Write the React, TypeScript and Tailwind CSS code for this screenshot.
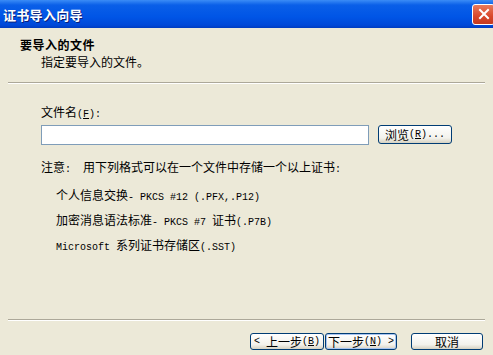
import React from 'react';

const cjk = '"Noto Sans CJK SC", "Noto Sans CJK JP", sans-serif';

// half-width latin segment, SimSun-ish
const L: React.FC<{ children: React.ReactNode }> = ({ children }) => (
  <span className="font-['Liberation_Mono',monospace] text-[10px] whitespace-pre">{children}</span>
);

const XpButton: React.FC<{ children: React.ReactNode; width: string; isDefault?: boolean }> = ({ children, width, isDefault }) => (
  <div
    className={`${width} h-[17px] flex items-center justify-center rounded-[3px] border border-[#003c74] bg-[linear-gradient(to_bottom,#ffffff,#f3f2ec_70%,#d6d2c2)] text-[12px] leading-none text-black ${
      isDefault ? 'shadow-[inset_0_0_0_1px_#a8c4f0]' : ''
    }`}
  >
    {children}
  </div>
);

export default function App() {
  return (
    <div className="w-[493px] h-[355px] overflow-hidden bg-[#ece9d8] flex flex-col text-black" style={{ fontFamily: cjk }}>
      {/* Title bar */}
      <div className="h-[28px] shrink-0 flex items-center bg-[linear-gradient(to_bottom,#3b8cf6_0%,#0a5fe8_18%,#0055e6_60%,#0048d8_90%,#003cc0_100%)]">
        <span className="pl-[3px] text-[13px] font-bold leading-none text-white tracking-[0.3px] [text-shadow:1px_1px_0_#0a1f7a]">
          证书导入向导
        </span>
        <div className="ml-auto -mr-[2px] w-[23px] h-[21px] rounded-[3px] border border-white bg-[linear-gradient(to_bottom,#e87a5c,#d9472a_60%,#c43a20)] flex items-center justify-center">
          <svg width="12" height="12" viewBox="0 0 12 12">
            <path d="M2 2 L10 10 M10 2 L2 10" stroke="#ffffff" strokeWidth="2" strokeLinecap="square" />
          </svg>
        </div>
      </div>

      {/* Header */}
      <div className="h-[54px] shrink-0 flex flex-col pt-[10px]">
        <div className="pl-[20px] text-[12px] font-bold leading-[14px] tracking-[0.5px]">要导入的文件</div>
        <div className="pl-[41px] mt-[3px] text-[12px] leading-[14px]">指定要导入的文件。</div>
      </div>
      <div className="mx-[8px] h-[2px] shrink-0 border-t border-[#aca899] border-b border-b-white" />

      {/* Body */}
      <div className="flex-1 flex flex-col pl-[41px] pt-[21px]">
        <div className="text-[12px] leading-[14px]">
          文件名<L>(<span className="underline">F</span>):</L>
        </div>
        <div className="mt-[3px] flex items-start">
          <div className="w-[328px] h-[20px] border border-[#7f9db9] bg-white" />
          <div className="ml-[9px]">
            <div className="w-[74px] h-[19px] flex items-center justify-center rounded-[3px] border border-[#003c74] bg-[linear-gradient(to_bottom,#ffffff,#f3f2ec_70%,#d6d2c2)] text-[12px] leading-none">
              浏览<L>(<span className="underline">R</span>)...</L>
            </div>
          </div>
        </div>
        <div className="mt-[15px] text-[12px] leading-[14px] whitespace-pre">
          注意<L>:  </L>用下列格式可以在一个文件中存储一个以上证书<L>:</L>
        </div>
        <div className="pl-[15px] flex flex-col gap-[8px] mt-[11px] text-[12px] leading-[14px]">
          <div className="whitespace-pre">
            个人信息交换<L>- PKCS #12 (.PFX,.P12)</L>
          </div>
          <div className="whitespace-pre">
            加密消息语法标准<L>- PKCS #7 </L>证书<L>(.P7B)</L>
          </div>
          <div className="whitespace-pre">
            <L>Microsoft </L>系列证书存储区<L>(.SST)</L>
          </div>
        </div>
      </div>

      {/* Footer */}
      <div className="mx-[8px] h-[2px] shrink-0 border-t border-[#aca899] border-b border-b-white" />
      <div className="h-[34px] shrink-0 flex items-start justify-end pt-[12px] pr-[10px]">
        <XpButton width="w-[74px]">
          <L>&lt; </L>上一步<L>(<span className="underline">B</span>)</L>
        </XpButton>
        <div className="ml-[1px]">
          <XpButton width="w-[72px]" isDefault>
            下一步<L>(<span className="underline">N</span>) &gt;</L>
          </XpButton>
        </div>
        <div className="ml-[14px]">
          <XpButton width="w-[72px]">取消</XpButton>
        </div>
      </div>
    </div>
  );
}
